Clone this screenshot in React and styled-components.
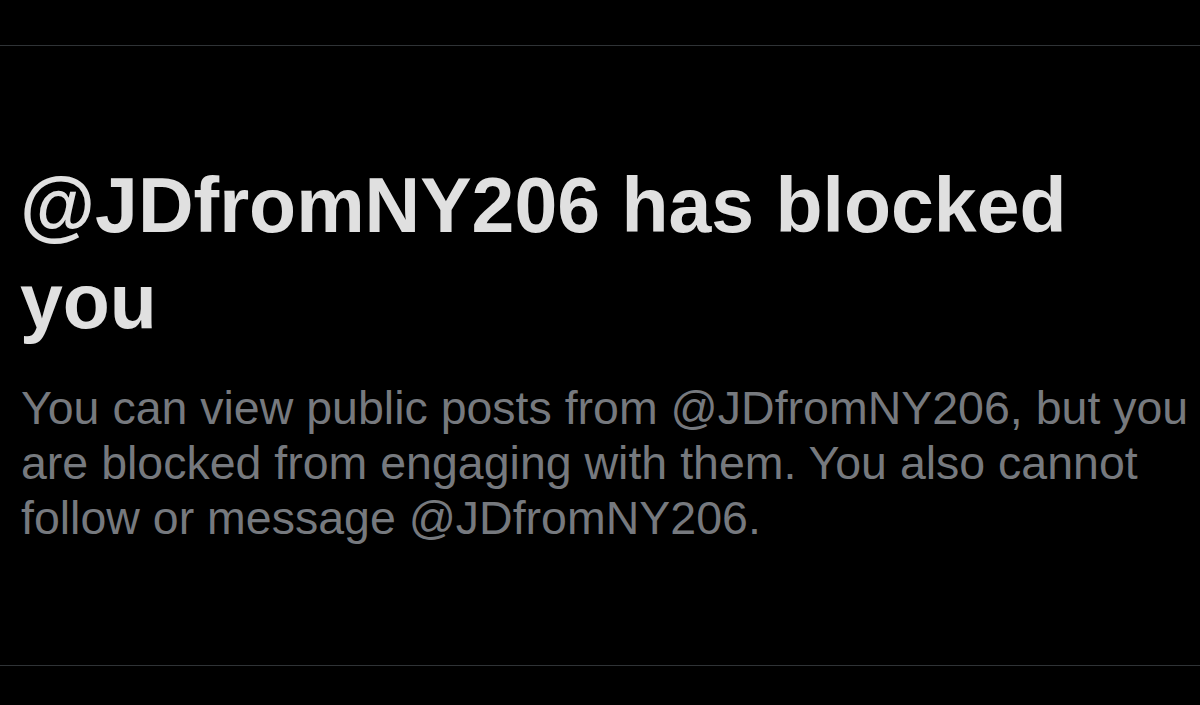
import React from 'react';
import styled, { createGlobalStyle } from 'styled-components';

const GlobalStyle = createGlobalStyle`
  html, body {
    margin: 0;
    padding: 0;
    background: #000;
  }
`;

const Screen = styled.div`
  width: 1200px;
  height: 705px;
  background: #000;
  display: flex;
  flex-direction: column;
  overflow: hidden;
`;

const Divider = styled.div`
  height: 1px;
  background: #2f3336;
  margin-top: ${p => p.top}px;
`;

const Content = styled.div`
  padding: 111px 6px 0 20px;
  height: 619px;
  box-sizing: border-box;
`;

const Title = styled.h1`
  margin: 0;
  max-width: 1140px;
  color: #e0e0e0;
  font-family: "Liberation Sans", Arial, sans-serif;
  font-weight: 700;
  font-size: 77px;
  line-height: 96px;
`;

const Message = styled.p`
  margin: 32px 0 0 1px;
  color: #76797e;
  font-family: "Liberation Sans", Arial, sans-serif;
  font-size: 46.5px;
  line-height: 55px;
`;

export default function App() {
  return (
    <Screen>
      <GlobalStyle />
      <Divider top={45} />
      <Content>
        <Title>@JDfromNY206 has blocked you</Title>
        <Message>
          You can view public posts from @JDfromNY206, but you are blocked
          from engaging with them. You also cannot follow or message
          @JDfromNY206.
        </Message>
      </Content>
      <Divider top={0} />
    </Screen>
  );
}
